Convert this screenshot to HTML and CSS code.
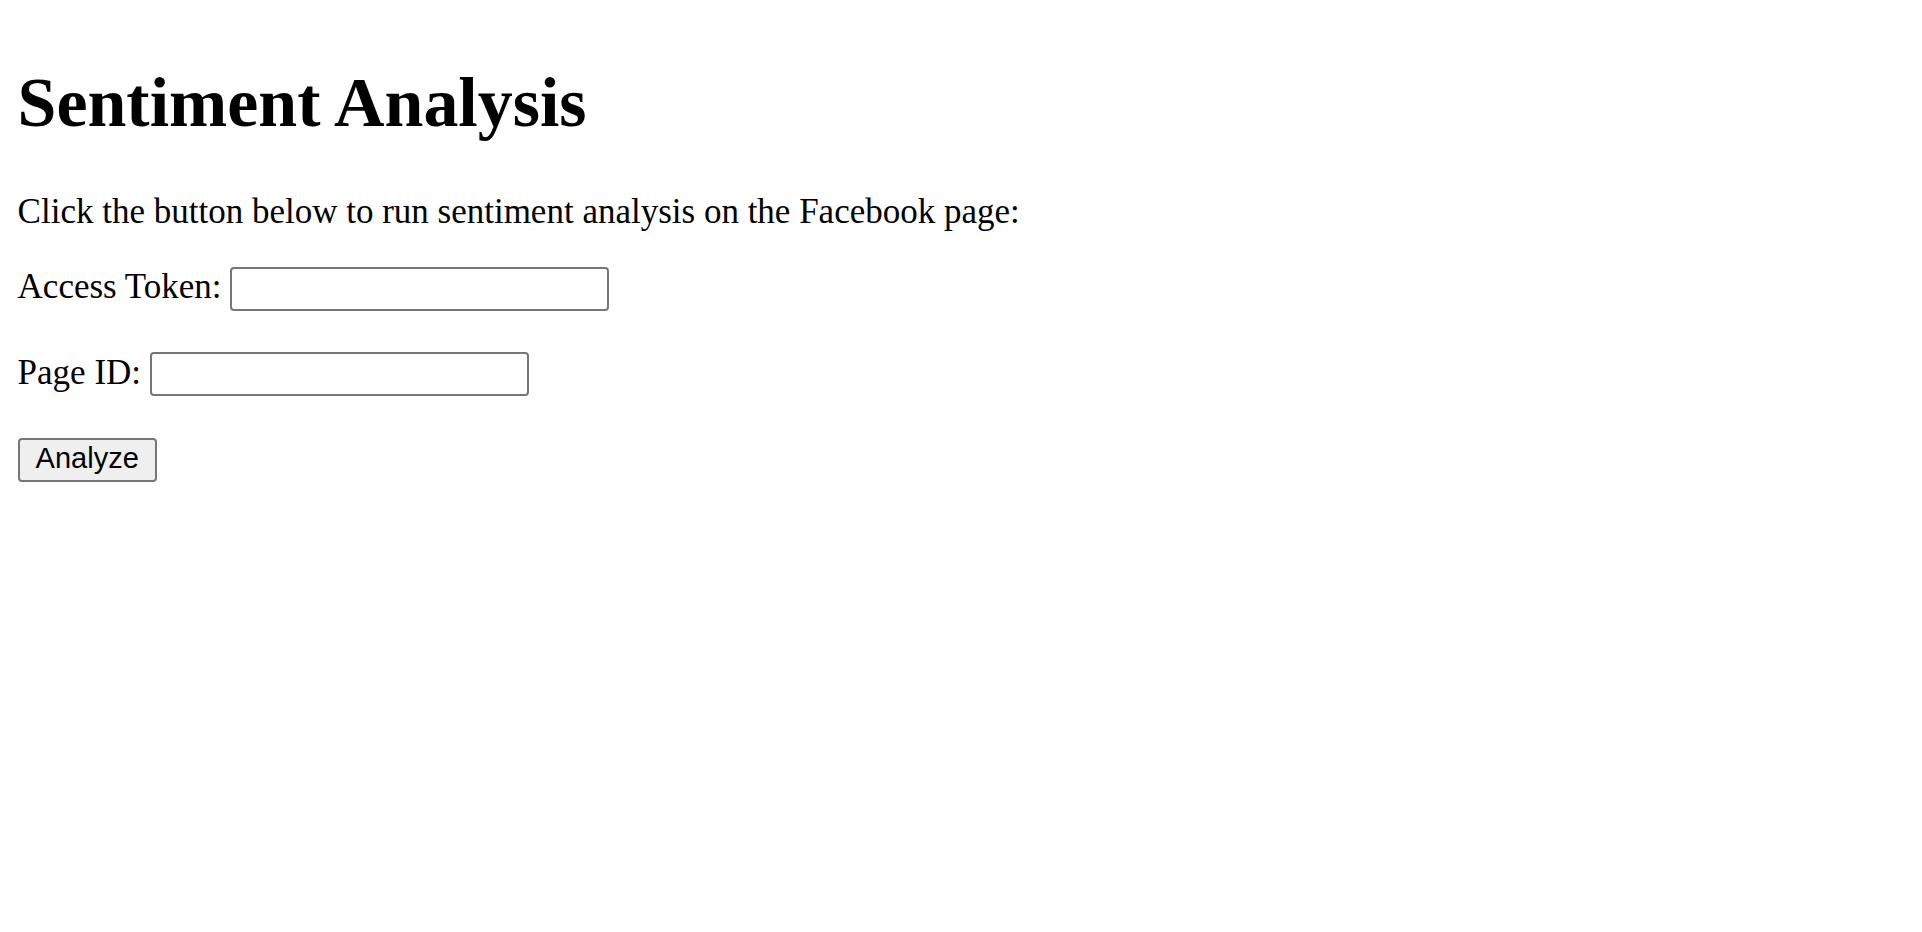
FILE: index.html
```html
<!DOCTYPE html>
<html lang="en">
<head>
<meta charset="utf-8">
<title>Sentiment Analysis</title>
<link rel="stylesheet" href="styles.css">
</head>
<body>
<h1 class="title">Sentiment Analysis</h1>
<p class="intro">Click the button below to run sentiment analysis on the Facebook page:</p>
<form class="form">
  <div class="field">
    <label for="token">Access Token:</label>
    <input id="token" type="text">
  </div>
  <div class="field">
    <label for="page">Page ID:</label>
    <input id="page" type="text">
  </div>
  <div class="actions">
    <button type="button" class="btn">Analyze</button>
  </div>
</form>
</body>
</html>
```

FILE: styles.css
```css
html {
  background: #ffffff;
}

body {
  margin: 0;
  padding: 61.5px 17.6px 0;
  font-family: "Liberation Serif", "Times New Roman", serif;
  color: #000000;
  background: #ffffff;
}

.title {
  font-size: 69.9px;
  font-weight: bold;
  line-height: 81px;
  margin: 0 0 49.5px;
}

.intro {
  font-size: 35px;
  line-height: 40.5px;
  margin: 0 0 34.3px;
}

.form {
  display: flex;
  flex-direction: column;
  align-items: flex-start;
  gap: 41.5px;
  margin: 0;
}

.field {
  display: flex;
  align-items: baseline;
  gap: 8.8px;
  font-size: 35px;
  line-height: 40.5px;
}

.field input {
  width: 379px;
  height: 44px;
  box-sizing: border-box;
  border: 2px solid #767676;
  border-radius: 4px;
  padding: 0 4px;
  margin: 0;
  background: #ffffff;
  font: 29px "Liberation Sans", Arial, sans-serif;
}

.actions {
  display: flex;
}

.btn {
  height: 44px;
  box-sizing: border-box;
  margin: 0;
  padding: 0 16px 3px;
  border: 2px solid #767676;
  border-radius: 4px;
  background: #efefef;
  color: #000000;
  font: 29px "Liberation Sans", Arial, sans-serif;
  line-height: normal;
}
```
